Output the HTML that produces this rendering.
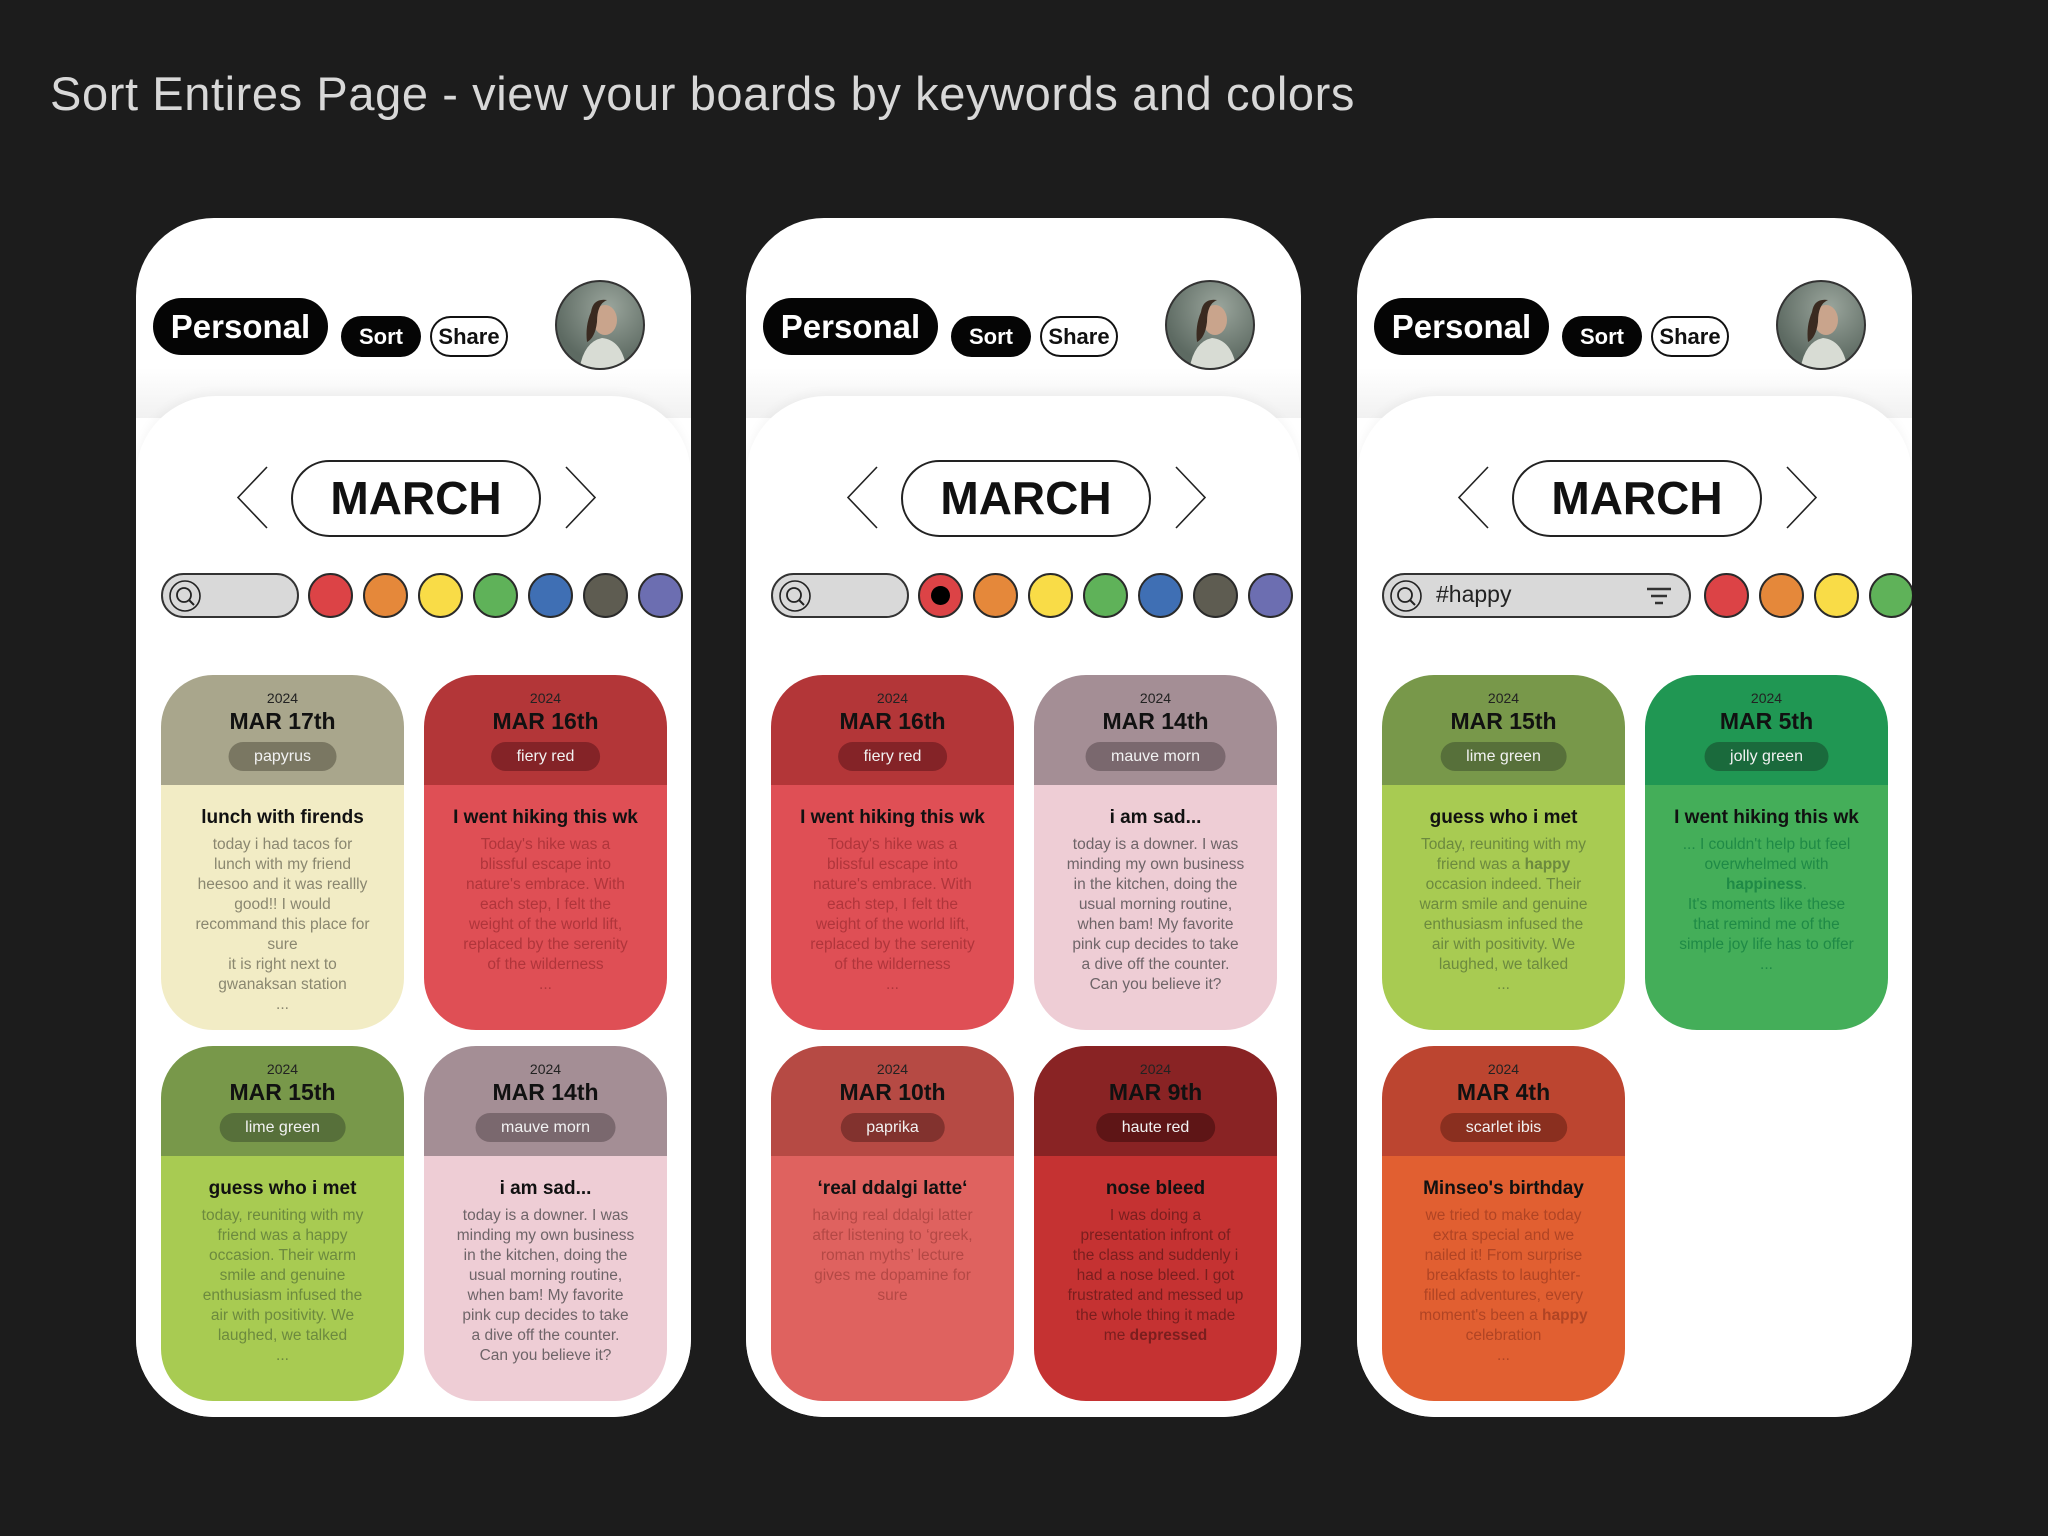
<!DOCTYPE html>
<html><head><meta charset="utf-8"><style>
*{box-sizing:border-box;margin:0;padding:0}
body{width:2048px;height:1536px;background:#1c1c1c;position:relative;overflow:hidden;font-family:"Liberation Sans",sans-serif}
.title{position:absolute;left:50px;top:66px;font-size:47px;color:#d8d8d8;font-weight:300;letter-spacing:0.6px;white-space:nowrap}
.phone{position:absolute;top:218px;width:555px;height:1199px;background:#fff;border-radius:78px;overflow:hidden}
.band{position:absolute;left:0;top:150px;width:100%;height:50px;background:linear-gradient(#fff,#f1f1f1)}
.content{position:absolute;left:0;top:178px;width:100%;height:1100px;background:#fff;border-radius:80px 80px 0 0;box-shadow:0 -4px 10px rgba(0,0,0,.04)}
.abs{position:absolute}
.personal{left:17px;top:80px;width:175px;height:57px;background:#050505;color:#fff;border-radius:30px;font-size:33px;text-align:center;line-height:57px;font-weight:bold}
.sort{left:205px;top:98px;width:80px;height:41px;background:#050505;color:#fff;border-radius:21px;font-size:22px;text-align:center;line-height:41px;font-weight:bold}
.share{left:294px;top:98px;width:78px;height:41px;background:#fff;border:2px solid #111;color:#111;border-radius:21px;font-size:22px;text-align:center;line-height:37px;font-weight:bold}
.avatar{left:419px;top:62px;width:90px;height:90px;border-radius:50%;border:2px solid #333;overflow:hidden;background:radial-gradient(circle at 60% 30%,#9aa59c,#5d6a62 70%)}
.march{left:155px;top:242px;width:250px;height:77px;border:2px solid #222;border-radius:40px;font-size:46px;font-weight:bold;text-align:center;line-height:73px;color:#111}
.search{top:355px;left:25px;height:45px;background:#d9d9d9;border:2px solid #333;border-radius:23px}
.dot{top:355px;width:45px;height:45px;border-radius:50%;border:2px solid #2a2a2a}
.card{width:243px;height:355px;border-radius:52px;overflow:hidden;text-align:center}
.hd{height:110px;position:relative}
.yr{position:absolute;top:15px;width:100%;font-size:14px;color:#222}
.dt{position:absolute;top:33px;width:100%;font-size:23px;font-weight:bold;color:#111}
.tag{position:absolute;top:67px;left:50%;transform:translateX(-50%);height:29px;padding:0 26px;border-radius:15px;font-size:16px;line-height:29px;color:#f2f2f2;white-space:nowrap}
.bd{height:245px;padding:21px 8px 0}
.bt{font-size:19px;font-weight:bold;color:#111;line-height:24px;margin-bottom:5px}
.tx{font-size:15.5px;line-height:20px}
</style></head><body>
<div class="title">Sort Entires Page - view your boards by keywords and colors</div>

<!-- PHONE 1 -->
<div class="phone" style="left:136px">
<div class="band"></div><div class="content"></div>
<div class="abs personal">Personal</div><div class="abs sort">Sort</div><div class="abs share">Share</div>
<div class="abs avatar"><svg width="90" height="90" viewBox="0 0 90 90"><path d="M22 90 Q26 60 45 56 Q66 58 70 90Z" fill="#d8dcd4"/><ellipse cx="48" cy="38" rx="12" ry="15" fill="#c9a48c"/><path d="M34 30 Q36 16 50 18 Q40 22 40 40 Q38 56 30 60 Q28 44 34 30Z" fill="#3a2a20"/></svg></div>
<svg class="abs" style="left:100px;top:248px" width="33" height="63"><path d="M31 1 L2 31.5 L31 62" fill="none" stroke="#222" stroke-width="1.6"/></svg>
<div class="abs march">MARCH</div>
<svg class="abs" style="left:428px;top:248px" width="33" height="63"><path d="M2 1 L31 31.5 L2 62" fill="none" stroke="#222" stroke-width="1.6"/></svg>
<div class="abs search" style="width:138px"><svg class="abs" style="left:5px;top:4px" width="34" height="34"><circle cx="17" cy="17" r="15" fill="none" stroke="#222" stroke-width="1.6"/><circle cx="16" cy="16" r="7" fill="none" stroke="#222" stroke-width="1.8"/><path d="M21 21 L26 26" stroke="#222" stroke-width="2"/></svg></div>
<div class="abs dot" style="left:172px;background:#dc4346"></div>
<div class="abs dot" style="left:227px;background:#e5883a"></div>
<div class="abs dot" style="left:282px;background:#f9dc47"></div>
<div class="abs dot" style="left:337px;background:#5fb259"></div>
<div class="abs dot" style="left:392px;background:#3f6fb4"></div>
<div class="abs dot" style="left:447px;background:#5e5c51"></div>
<div class="abs dot" style="left:502px;background:#6c6eb1"></div>

<div class="abs card" style="left:25px;top:457px"><div class="hd" style="background:#a9a68c"><div class="yr">2024</div><div class="dt">MAR 17th</div><div class="tag" style="background:#7a7762">papyrus</div></div>
<div class="bd" style="background:#f2ecc5"><div class="bt">lunch with firends</div><div class="tx" style="color:#8a8770">today i had tacos for<br>lunch with my friend<br>heesoo and it was reallly<br>good!! I would<br>recommand this place for<br>sure<br>it is right next to<br>gwanaksan station<br>...</div></div></div>
<div class="abs card" style="left:288px;top:457px"><div class="hd" style="background:#b33638"><div class="yr">2024</div><div class="dt">MAR 16th</div><div class="tag" style="background:#842327">fiery red</div></div>
<div class="bd" style="background:#df4f55"><div class="bt">I went hiking this wk</div><div class="tx" style="color:#b0353b">Today's hike was a<br>blissful escape into<br>nature's embrace. With<br>each step, I felt the<br>weight of the world lift,<br>replaced by the serenity<br>of the wilderness<br>...</div></div></div>
<div class="abs card" style="left:25px;top:828px"><div class="hd" style="background:#78984a"><div class="yr">2024</div><div class="dt">MAR 15th</div><div class="tag" style="background:#57703a">lime green</div></div>
<div class="bd" style="background:#a8cb52"><div class="bt">guess who i met</div><div class="tx" style="color:#6c8a3e">today, reuniting with my<br>friend was a happy<br>occasion. Their warm<br>smile and genuine<br>enthusiasm infused the<br>air with positivity. We<br>laughed, we talked<br>...</div></div></div>
<div class="abs card" style="left:288px;top:828px"><div class="hd" style="background:#a48e95"><div class="yr">2024</div><div class="dt">MAR 14th</div><div class="tag" style="background:#7a686e">mauve morn</div></div>
<div class="bd" style="background:#eecdd5"><div class="bt">i am sad...</div><div class="tx" style="color:#6e6468">today is a downer. I was<br>minding my own business<br>in the kitchen, doing the<br>usual morning routine,<br>when bam! My favorite<br>pink cup decides to take<br>a dive off the counter.<br>Can you believe it?</div></div></div>
</div>

<!-- PHONE 2 -->
<div class="phone" style="left:746px">
<div class="band"></div><div class="content"></div>
<div class="abs personal">Personal</div><div class="abs sort">Sort</div><div class="abs share">Share</div>
<div class="abs avatar"><svg width="90" height="90" viewBox="0 0 90 90"><path d="M22 90 Q26 60 45 56 Q66 58 70 90Z" fill="#d8dcd4"/><ellipse cx="48" cy="38" rx="12" ry="15" fill="#c9a48c"/><path d="M34 30 Q36 16 50 18 Q40 22 40 40 Q38 56 30 60 Q28 44 34 30Z" fill="#3a2a20"/></svg></div>
<svg class="abs" style="left:100px;top:248px" width="33" height="63"><path d="M31 1 L2 31.5 L31 62" fill="none" stroke="#222" stroke-width="1.6"/></svg>
<div class="abs march">MARCH</div>
<svg class="abs" style="left:428px;top:248px" width="33" height="63"><path d="M2 1 L31 31.5 L2 62" fill="none" stroke="#222" stroke-width="1.6"/></svg>
<div class="abs search" style="width:138px"><svg class="abs" style="left:5px;top:4px" width="34" height="34"><circle cx="17" cy="17" r="15" fill="none" stroke="#222" stroke-width="1.6"/><circle cx="16" cy="16" r="7" fill="none" stroke="#222" stroke-width="1.8"/><path d="M21 21 L26 26" stroke="#222" stroke-width="2"/></svg></div>
<div class="abs dot" style="left:172px;background:#dc4346"><div style="position:absolute;left:11px;top:11px;width:19px;height:19px;border-radius:50%;background:#000"></div></div>
<div class="abs dot" style="left:227px;background:#e5883a"></div>
<div class="abs dot" style="left:282px;background:#f9dc47"></div>
<div class="abs dot" style="left:337px;background:#5fb259"></div>
<div class="abs dot" style="left:392px;background:#3f6fb4"></div>
<div class="abs dot" style="left:447px;background:#5e5c51"></div>
<div class="abs dot" style="left:502px;background:#6c6eb1"></div>

<div class="abs card" style="left:25px;top:457px"><div class="hd" style="background:#b33638"><div class="yr">2024</div><div class="dt">MAR 16th</div><div class="tag" style="background:#842327">fiery red</div></div>
<div class="bd" style="background:#df4f55"><div class="bt">I went hiking this wk</div><div class="tx" style="color:#b0353b">Today's hike was a<br>blissful escape into<br>nature's embrace. With<br>each step, I felt the<br>weight of the world lift,<br>replaced by the serenity<br>of the wilderness<br>...</div></div></div>
<div class="abs card" style="left:288px;top:457px"><div class="hd" style="background:#a48e95"><div class="yr">2024</div><div class="dt">MAR 14th</div><div class="tag" style="background:#7a686e">mauve morn</div></div>
<div class="bd" style="background:#eecdd5"><div class="bt">i am sad...</div><div class="tx" style="color:#6e6468">today is a downer. I was<br>minding my own business<br>in the kitchen, doing the<br>usual morning routine,<br>when bam! My favorite<br>pink cup decides to take<br>a dive off the counter.<br>Can you believe it?</div></div></div>
<div class="abs card" style="left:25px;top:828px"><div class="hd" style="background:#b64a44"><div class="yr">2024</div><div class="dt">MAR 10th</div><div class="tag" style="background:#82322e">paprika</div></div>
<div class="bd" style="background:#df625f"><div class="bt">‘real ddalgi latte‘</div><div class="tx" style="color:#b44845">having real ddalgi latter<br>after listening to ‘greek,<br>roman myths’ lecture<br>gives me dopamine for<br>sure</div></div></div>
<div class="abs card" style="left:288px;top:828px"><div class="hd" style="background:#892324"><div class="yr">2024</div><div class="dt">MAR 9th</div><div class="tag" style="background:#5e1516">haute red</div></div>
<div class="bd" style="background:#c53232"><div class="bt">nose bleed</div><div class="tx" style="color:#7a1e1e">I was doing a<br>presentation infront of<br>the class and suddenly i<br>had a nose bleed. I got<br>frustrated and messed up<br>the whole thing it made<br>me <b>depressed</b></div></div></div>
</div>

<!-- PHONE 3 -->
<div class="phone" style="left:1357px">
<div class="band"></div><div class="content"></div>
<div class="abs personal">Personal</div><div class="abs sort">Sort</div><div class="abs share">Share</div>
<div class="abs avatar"><svg width="90" height="90" viewBox="0 0 90 90"><path d="M22 90 Q26 60 45 56 Q66 58 70 90Z" fill="#d8dcd4"/><ellipse cx="48" cy="38" rx="12" ry="15" fill="#c9a48c"/><path d="M34 30 Q36 16 50 18 Q40 22 40 40 Q38 56 30 60 Q28 44 34 30Z" fill="#3a2a20"/></svg></div>
<svg class="abs" style="left:100px;top:248px" width="33" height="63"><path d="M31 1 L2 31.5 L31 62" fill="none" stroke="#222" stroke-width="1.6"/></svg>
<div class="abs march">MARCH</div>
<svg class="abs" style="left:428px;top:248px" width="33" height="63"><path d="M2 1 L31 31.5 L2 62" fill="none" stroke="#222" stroke-width="1.6"/></svg>
<div class="abs search" style="width:309px"><svg class="abs" style="left:5px;top:4px" width="34" height="34"><circle cx="17" cy="17" r="15" fill="none" stroke="#222" stroke-width="1.6"/><circle cx="16" cy="16" r="7" fill="none" stroke="#222" stroke-width="1.8"/><path d="M21 21 L26 26" stroke="#222" stroke-width="2"/></svg>
<div class="abs" style="left:52px;top:6px;font-size:23px;color:#222">#happy</div>
<svg class="abs" style="left:262px;top:12px" width="26" height="20"><path d="M1 2H25M5 9H21M9 16H17" stroke="#333" stroke-width="2.4"/></svg></div>
<div class="abs dot" style="left:347px;background:#dc4346"></div>
<div class="abs dot" style="left:402px;background:#e5883a"></div>
<div class="abs dot" style="left:457px;background:#f9dc47"></div>
<div class="abs dot" style="left:512px;background:#5fb259"></div>

<div class="abs card" style="left:25px;top:457px"><div class="hd" style="background:#78984a"><div class="yr">2024</div><div class="dt">MAR 15th</div><div class="tag" style="background:#57703a">lime green</div></div>
<div class="bd" style="background:#a8cb52"><div class="bt">guess who i met</div><div class="tx" style="color:#6c8a3e">Today, reuniting with my<br>friend was a <b>happy</b><br>occasion indeed. Their<br>warm smile and genuine<br>enthusiasm infused the<br>air with positivity. We<br>laughed, we talked<br>...</div></div></div>
<div class="abs card" style="left:288px;top:457px"><div class="hd" style="background:#209753"><div class="yr">2024</div><div class="dt">MAR 5th</div><div class="tag" style="background:#1a6a3c">jolly green</div></div>
<div class="bd" style="background:#44ae59"><div class="bt">I went hiking this wk</div><div class="tx" style="color:#1f8a46">... I couldn't help but feel<br>overwhelmed with<br><b>happiness</b>.<br>It's moments like these<br>that remind me of the<br>simple joy life has to offer<br>...</div></div></div>
<div class="abs card" style="left:25px;top:828px"><div class="hd" style="background:#bc4530"><div class="yr">2024</div><div class="dt">MAR 4th</div><div class="tag" style="background:#8a2f1f">scarlet ibis</div></div>
<div class="bd" style="background:#e15f31"><div class="bt">Minseo's birthday</div><div class="tx" style="color:#b04424">we tried to make today<br>extra special and we<br>nailed it! From surprise<br>breakfasts to laughter-<br>filled adventures, every<br>moment's been a <b>happy</b><br>celebration<br>...</div></div></div>
</div>
</body></html>
